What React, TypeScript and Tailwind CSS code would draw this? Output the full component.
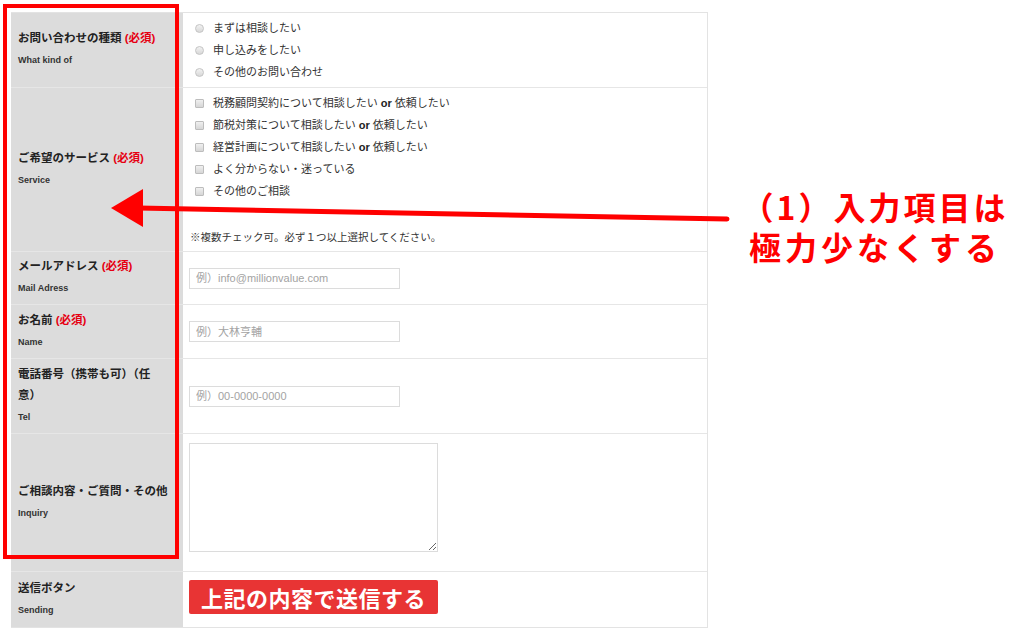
import React from 'react'

const radios = ['まずは相談したい', '申し込みをしたい', 'その他のお問い合わせ']

const services: { text: string; or?: boolean }[] = [
  { text: '税務顧問契約について相談したい', or: true },
  { text: '節税対策について相談したい', or: true },
  { text: '経営計画について相談したい', or: true },
  { text: 'よく分からない・迷っている' },
  { text: 'その他のご相談' },
]

function Required() {
  return <span className="text-[#e60012]"> (必須)</span>
}

function Label({ title, sub, required }: { title: React.ReactNode; sub: string; required?: boolean }) {
  return (
    <div className="w-[172px] shrink-0 bg-[#dcdcdc] pl-[7px] pr-[4px] flex flex-col justify-center">
      <p className="text-[11.5px] font-bold leading-[21px] text-[#222]">
        {title}
        {required && <Required />}
      </p>
      <p className="text-[9px] font-bold leading-[23px] text-[#333]">{sub}</p>
    </div>
  )
}

function RadioDot() {
  return (
    <span className="inline-block w-[9px] h-[9px] rounded-full border border-[#c4c4c4] bg-gradient-to-b from-[#f2f2f2] to-[#d8d8d8]" />
  )
}

function CheckBox() {
  return (
    <span className="inline-block w-[9px] h-[9px] rounded-[1px] border border-[#bdbdbd] bg-gradient-to-b from-[#f0f0f0] to-[#d6d6d6]" />
  )
}

function TextInput({ placeholder }: { placeholder: string }) {
  return (
    <input
      type="text"
      placeholder={placeholder}
      className="ml-[6px] w-[211px] h-[21px] border border-[#dcdcdc] bg-white px-[6px] text-[11px] text-[#333] outline-none placeholder:text-[#a3a3a3]"
    />
  )
}

export default function App() {
  return (
    <div className="relative w-[1011px] h-[635px] overflow-hidden bg-white font-['Liberation_Sans','Noto_Sans_CJK_JP',sans-serif] text-[#333]">
      <div className="ml-[11px] pt-[12px] w-[697px]">
        <div className="border-t border-r border-[#e3e3e3]">
          {/* 種類 */}
          <div className="flex h-[75px] border-b border-[#e6e6e6]">
            <Label title="お問い合わせの種類" sub="What kind of" required />
            <div className="flex-1 pl-[12px] pt-[4px]">
              {radios.map((r) => (
                <div key={r} className="flex items-center gap-[9px] h-[22px] text-[11px]">
                  <RadioDot />
                  <span>{r}</span>
                </div>
              ))}
            </div>
          </div>

          {/* サービス */}
          <div className="flex h-[164px] border-b border-[#e6e6e6]">
            <Label title="ご希望のサービス" sub="Service" required />
            <div className="flex-1 pt-[4px]">
              {services.map((s) => (
                <div key={s.text} className="flex items-center gap-[9px] h-[22px] pl-[12px] text-[11px]">
                  <CheckBox />
                  <span>
                    {s.text}
                    {s.or && (
                      <>
                        {' '}
                        <b className="text-[#222]">or</b> 依頼したい
                      </>
                    )}
                  </span>
                </div>
              ))}
              <p className="mt-[24px] pl-[7px] text-[10.5px] leading-[22px]">
                ※複数チェック可。必ず１つ以上選択してください。
              </p>
            </div>
          </div>

          {/* メール */}
          <div className="flex h-[53px] border-b border-[#e6e6e6]">
            <Label title="メールアドレス" sub="Mail Adress" required />
            <div className="flex-1 flex items-center">
              <TextInput placeholder="例）info@millionvalue.com" />
            </div>
          </div>

          {/* 名前 */}
          <div className="flex h-[54px] border-b border-[#e6e6e6]">
            <Label title="お名前" sub="Name" required />
            <div className="flex-1 flex items-center">
              <TextInput placeholder="例）大林亨輔" />
            </div>
          </div>

          {/* 電話 */}
          <div className="flex h-[75px] border-b border-[#e6e6e6]">
            <Label
              title={
                <>
                  電話番号（携帯も可）（任
                  <br />
                  意）
                </>
              }
              sub="Tel"
            />
            <div className="flex-1 flex items-center">
              <TextInput placeholder="例）00-0000-0000" />
            </div>
          </div>

          {/* 相談内容 */}
          <div className="flex h-[138px] border-b border-[#e6e6e6]">
            <Label title="ご相談内容・ご質問・その他" sub="Inquiry" />
            <div className="flex-1 pt-[9px]">
              <textarea className="ml-[6px] block w-[249px] h-[109px] border border-[#dcdcdc] bg-white outline-none" />
            </div>
          </div>

          {/* 送信 */}
          <div className="flex h-[56px] border-b border-[#e3e3e3]">
            <Label title="送信ボタン" sub="Sending" />
            <div className="flex-1 pt-[8px]">
              <button className="ml-[6px] w-[249px] h-[34px] rounded-[2px] bg-[#e83434] text-[22px] font-bold leading-[34px] tracking-[0.5px] text-white font-['Noto_Sans_CJK_JP',sans-serif]">
                上記の内容で送信する
              </button>
            </div>
          </div>
        </div>
      </div>

      {/* 注釈（赤枠・矢印） */}
      <svg className="absolute inset-0 pointer-events-none" width="1011" height="635" viewBox="0 0 1011 635">
        <rect x="5" y="6" width="172" height="551" fill="none" stroke="#ff0000" strokeWidth="4" />
        <line x1="138" y1="208" x2="727" y2="219" stroke="#ff0000" strokeWidth="5" strokeLinecap="round" />
        <polygon points="111,208 143,189 143,227" fill="#ff0000" />
      </svg>

      <div className="absolute left-[740px] top-[186px] w-[270px] text-center whitespace-nowrap text-[32px] font-bold leading-[40px] text-[#ff0000] font-['Noto_Sans_CJK_JP',sans-serif]">
        <p className="tracking-[3px]">（1）入力項目は</p>
        <p className="tracking-[4px]">極力少なくする</p>
      </div>
    </div>
  )
}
